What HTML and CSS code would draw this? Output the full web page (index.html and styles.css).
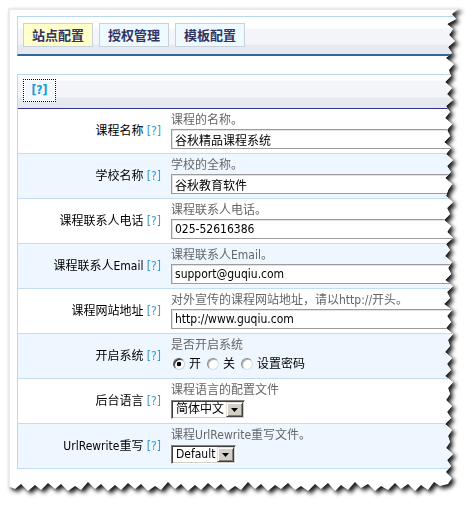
FILE: index.html
```html
<!DOCTYPE html>
<html lang="zh-CN">
<head>
<meta charset="utf-8">
<title>站点配置</title>
<link rel="stylesheet" href="styles.css">
</head>
<body>
<div class="shadow">
  <div class="sheet">
    <div class="frame">
      <div class="tabbox">
        <span class="tab on">站点配置</span>
        <span class="tab">授权管理</span>
        <span class="tab">模板配置</span>
      </div>
      <div class="table">
        <div class="thead"><span class="helpbtn">[?]</span></div>
        <div class="row">
          <div class="lab">课程名称 <span class="q">[?]</span></div>
          <div class="val"><div class="desc">课程的名称。</div><input class="inp" value="谷秋精品课程系统" readonly></div>
        </div>
        <div class="row alt">
          <div class="lab">学校名称 <span class="q">[?]</span></div>
          <div class="val"><div class="desc">学校的全称。</div><input class="inp" value="谷秋教育软件" readonly></div>
        </div>
        <div class="row">
          <div class="lab">课程联系人电话 <span class="q">[?]</span></div>
          <div class="val"><div class="desc">课程联系人电话。</div><input class="inp" value="025-52616386" readonly></div>
        </div>
        <div class="row alt">
          <div class="lab">课程联系人Email <span class="q">[?]</span></div>
          <div class="val"><div class="desc">课程联系人Email。</div><input class="inp" value="support@guqiu.com" readonly></div>
        </div>
        <div class="row">
          <div class="lab">课程网站地址 <span class="q">[?]</span></div>
          <div class="val"><div class="desc">对外宣传的课程网站地址，请以http://开头。</div><input class="inp" value="http://www.guqiu.com" readonly></div>
        </div>
        <div class="row alt">
          <div class="lab">开启系统 <span class="q">[?]</span></div>
          <div class="val"><div class="desc">是否开启系统</div>
            <div class="radios">
              <span class="radio on"></span><span class="rl">开</span>
              <span class="radio"></span><span class="rl">关</span>
              <span class="radio"></span><span class="rl">设置密码</span>
            </div>
          </div>
        </div>
        <div class="row">
          <div class="lab">后台语言 <span class="q">[?]</span></div>
          <div class="val"><div class="desc">课程语言的配置文件</div>
            <div class="selwrap"><span class="sel w1"><span class="v">简体中文</span><span class="b"><svg width="7" height="4" viewBox="0 0 7 4"><path d="M0 0H7L3.5 4Z" fill="#000"/></svg></span></span></div>
          </div>
        </div>
        <div class="row alt">
          <div class="lab">UrlRewrite重写 <span class="q">[?]</span></div>
          <div class="val"><div class="desc">课程UrlRewrite重写文件。</div>
            <div class="selwrap"><span class="sel w2"><span class="v">Default</span><span class="b"><svg width="7" height="4" viewBox="0 0 7 4"><path d="M0 0H7L3.5 4Z" fill="#000"/></svg></span></span></div>
          </div>
        </div>
      </div>
    </div>
  </div>
</div>
</body>
</html>
```

FILE: styles.css
```css
html, body {
  margin: 0;
  padding: 0;
  background: #fff;
  overflow: hidden;
  width: 474px;
  height: 511px;
}
body {
  font-family: "DejaVu Sans Condensed", "DejaVu Sans", "Noto Sans CJK SC", sans-serif;
  font-size: 12px;
  color: #000;
}
.shadow {
  width: 474px;
  height: 511px;
  filter: drop-shadow(3px 3px 2px rgba(0, 0, 0, 0.9));
}
.sheet {
  width: 474px;
  height: 511px;
  box-sizing: border-box;
  padding: 8px 0 0 8px;
  background: #fff;
  clip-path: polygon(8px 8px, 460px 8px,
    458px 9px, 452px 14px, 456px 19px, 447px 24px, 453px 29px, 449px 35px, 455px 41px, 448px 47px, 452px 53px, 446px 58px,
    454px 64px, 449px 70px, 451px 76px, 445px 82px, 452px 88px, 447px 94px, 453px 100px, 446px 106px, 450px 112px, 445px 118px,
    452px 124px, 447px 130px, 450px 136px, 444px 142px, 451px 148px, 446px 154px, 453px 160px, 447px 166px, 451px 172px, 445px 178px,
    452px 184px, 448px 190px, 446px 196px, 453px 202px, 447px 208px, 450px 214px, 444px 220px, 451px 226px, 447px 232px, 453px 238px,
    446px 244px, 450px 250px, 445px 256px, 452px 262px, 448px 268px, 451px 274px, 445px 280px, 453px 286px, 447px 292px, 450px 298px,
    444px 304px, 452px 310px, 447px 316px, 451px 322px, 446px 328px, 453px 334px, 448px 340px, 450px 346px, 445px 352px, 452px 358px,
    447px 364px, 451px 370px, 445px 376px, 453px 382px, 448px 388px, 450px 394px, 446px 400px, 452px 406px, 447px 412px, 451px 418px,
    445px 424px, 452px 430px, 448px 436px, 450px 442px, 446px 448px, 453px 454px, 447px 460px, 451px 466px, 446px 472px, 452px 478px,
    448px 484px,
    440px 486px, 434px 482px, 428px 490px, 421px 485px, 415px 491px, 408px 484px, 401px 489px, 395px 483px, 388px 490px, 381px 486px,
    375px 491px, 368px 484px, 361px 488px, 355px 482px, 348px 490px, 341px 485px, 335px 491px, 328px 483px, 321px 489px, 315px 484px,
    308px 491px, 301px 486px, 295px 490px, 288px 483px, 281px 489px, 275px 485px, 268px 491px, 261px 484px, 255px 489px, 248px 482px,
    241px 490px, 235px 486px, 228px 491px, 221px 484px, 215px 489px, 208px 483px, 201px 490px, 195px 485px, 188px 491px, 181px 484px,
    175px 489px, 168px 482px, 161px 490px, 155px 486px, 148px 491px, 141px 484px, 135px 489px, 128px 483px, 121px 490px, 115px 485px,
    108px 491px, 101px 484px, 95px 489px, 88px 482px, 81px 490px, 75px 486px, 68px 491px, 61px 484px, 55px 489px, 48px 483px,
    41px 490px, 35px 485px, 28px 491px, 21px 484px, 15px 489px, 8px 486px);
}
.frame {
  height: 100%;
  border-top: 2px solid #ebebeb;
  border-left: 2px solid #ebebeb;
  box-sizing: border-box;
}
.tabbox {
  margin: 6px 0 0 7px;
  width: 470px;
  height: 40px;
  box-sizing: border-box;
  border-top: 1px solid #b9d8ee;
  border-left: 1px solid #b9d8ee;
  border-bottom: 2px solid #336699;
  padding: 6px 0 0 5px;
  display: flex;
  gap: 6px;
  background: linear-gradient(to bottom, #fff 0, #fff 11px, #f5f6f9 12px, #f4f5f8 27px, #e7eaf1 28px, #e5e8f0 100%);
}
.tab {
  width: 70px;
  height: 24px;
  box-sizing: border-box;
  border: 1px solid #c9d1da;
  background: #eefaff;
  font-family: "Noto Sans CJK SC", sans-serif;
  font-weight: 700;
  font-size: 13px;
  line-height: 22px;
  text-align: center;
  color: #333366;
}
.tab.on {
  background: #ffffcc;
}
.table {
  margin: 18px 0 0 7px;
  width: 470px;
  border-top: 1px solid #b9d8ee;
  border-left: 1px solid #b9d8ee;
}
.thead {
  height: 34px;
  box-sizing: border-box;
  padding: 4px 0 0 5px;
  border-bottom: 1px solid #333388;
  background: linear-gradient(to bottom, #fff 0, #fff 5px, #f5f6f9 6px, #f3f5f8 22px, #e7eaf1 23px, #e5e8f0 100%);
}
.helpbtn {
  display: inline-block;
  width: 33px;
  height: 23px;
  box-sizing: border-box;
  border: 1px dotted #111;
  background: #f3f8fc;
  box-shadow: inset 0 0 0 1px #fff;
  text-align: center;
  line-height: 21px;
  font-weight: 700;
  font-size: 12px;
  color: #1a9ad6;
}
.row {
  display: grid;
  grid-template-columns: 148px 1fr;
  border-bottom: 1px solid #c3dcef;
  background: #fff;
}
.row.alt {
  background: #eef7ff;
}
.lab {
  text-align: right;
  padding-right: 5px;
  align-self: center;
  line-height: 16px;
}
.q {
  color: #3399cc;
}
.val {
  padding: 3px 0 4px 5px;
}
.desc {
  color: #666;
  line-height: 16px;
  height: 16px;
  white-space: nowrap;
}
.inp {
  display: block;
  margin: 0;
  margin-top: 1px;
  width: 300px;
  height: 20px;
  box-sizing: border-box;
  border: 1px solid #9c9c9c;
  box-shadow: inset 1px 1px 0 #e2e2e2;
  padding: 0 3px;
  font-family: "DejaVu Sans Condensed", "DejaVu Sans", "Noto Sans CJK SC", sans-serif;
  font-size: 12px;
  color: #000;
  background: #fff;
  outline: none;
}
.radios {
  height: 21px;
  display: flex;
  align-items: center;
  padding-top: 1px;
  box-sizing: border-box;
}
.radio {
  width: 12px;
  height: 12px;
  box-sizing: border-box;
  border-radius: 50%;
  border: 1px solid;
  border-color: #8a8a8a #dcdcdc #dcdcdc #8a8a8a;
  background: #fff;
  box-shadow: inset 1px 1px 0 #b0b0b0;
  margin: 0 4px 0 6px;
}
.radio:first-child {
  margin-left: 2px;
}
.radio.on {
  border-color: #555 #d0d0d0 #d0d0d0 #555;
  box-shadow: inset 1px 1px 0 #303030;
  background: radial-gradient(circle at 50% 50%, #000 0, #000 2px, #fff 2.6px);
}
.rl {
  line-height: 16px;
}
.selwrap {
  padding-top: 2px;
  height: 19px;
}
.sel {
  display: flex;
  height: 19px;
  box-sizing: border-box;
  border: 1px solid;
  border-color: #808080 #fff #fff #808080;
  box-shadow: inset 1px 1px 0 #404040, inset -1px -1px 0 #d4d0c8;
  background: #fff;
  padding: 1px;
}
.sel.w1 { width: 74px; }
.sel.w2 { width: 65px; }
.sel .v {
  flex: 1;
  padding-left: 3px;
  line-height: 15px;
  font-size: 12px;
  white-space: nowrap;
  overflow: hidden;
}
.sel .b {
  width: 17px;
  height: 15px;
  box-sizing: border-box;
  background: #d4d0c8;
  border: 1px solid;
  border-color: #e4e0d8 #404040 #404040 #e4e0d8;
  box-shadow: inset 1px 1px 0 #fff, inset -1px -1px 0 #808080;
  display: flex;
  align-items: center;
  justify-content: center;
}
```
